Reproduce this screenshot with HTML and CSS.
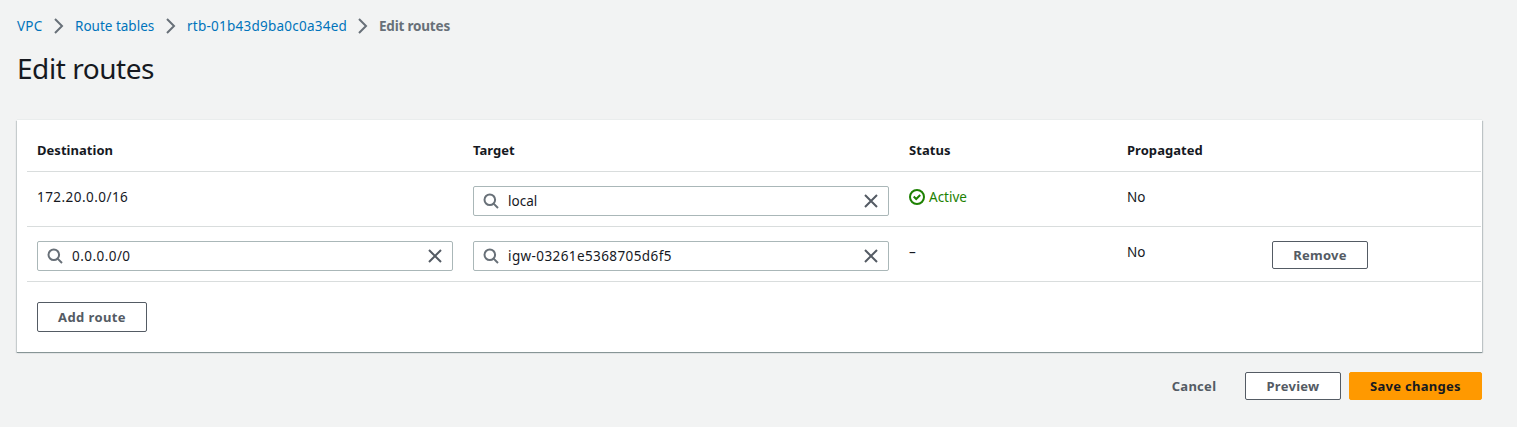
FILE: index.html
```html
<!DOCTYPE html>
<html lang="en">
<head>
<meta charset="utf-8">
<title>Edit routes</title>
<link rel="stylesheet" href="styles.css">
</head>
<body>
<svg width="0" height="0" class="defs">
  <symbol id="chevron" viewBox="0 0 16 16"><path d="M4 1l7 7-7 7"/></symbol>
  <symbol id="search" viewBox="0 0 16 16"><circle cx="6.8" cy="6.8" r="5.3"/><path d="M10.6 10.6L15 15"/></symbol>
  <symbol id="close" viewBox="0 0 16 16"><path d="M2 2l12 12M14 2L2 14"/></symbol>
  <symbol id="check" viewBox="0 0 16 16"><circle cx="8" cy="8" r="7"/><path d="M4.7 7.5l2.5 2.5 4-4"/></symbol>
</svg>
<main class="page">
  <nav class="crumbs">
    <a class="crumb vpc">VPC</a><svg class="icon chev"><use href="#chevron"/></svg>
    <a class="crumb tables">Route tables</a><svg class="icon chev"><use href="#chevron"/></svg>
    <a class="crumb rtb">rtb-01b43d9ba0c0a34ed</a><svg class="icon chev"><use href="#chevron"/></svg>
    <span class="crumb current">Edit routes</span>
  </nav>
  <h1 class="title">Edit routes</h1>
  <section class="card">
    <div class="row head">
      <div>Destination</div><div>Target</div><div>Status</div><div>Propagated</div><div></div>
    </div>
    <div class="row">
      <div class="text"><span class="cidr">172.20.0.0/16</span></div>
      <div class="field"><svg class="icon"><use href="#search"/></svg><span class="value">local</span><svg class="icon x"><use href="#close"/></svg></div>
      <div class="text active"><svg class="icon ok"><use href="#check"/></svg><span>Active</span></div>
      <div class="text">No</div><div></div>
    </div>
    <div class="row">
      <div class="field"><svg class="icon"><use href="#search"/></svg><span class="value zero">0.0.0.0/0</span><svg class="icon x"><use href="#close"/></svg></div>
      <div class="field"><svg class="icon"><use href="#search"/></svg><span class="value igw">igw-03261e5368705d6f5</span><svg class="icon x"><use href="#close"/></svg></div>
      <div class="text dash">–</div>
      <div class="text">No</div>
      <div><button class="btn remove">Remove</button></div>
    </div>
    <button class="btn add">Add route</button>
  </section>
  <footer class="actions">
    <button class="btn link">Cancel</button>
    <button class="btn preview">Preview</button>
    <button class="btn primary">Save changes</button>
  </footer>
</main>
</body>
</html>
```
FILE: styles.css
```css
* { box-sizing: border-box; }
body {
  margin: 0;
  background: #f2f3f3;
  color: #16191f;
  font: 14px/22px "Noto Sans", "Open Sans", sans-serif;
}
.defs { display: block; height: 0; }
.page { width: 1482px; padding: 15px 0 0 17px; }
.icon {
  flex: none;
  width: 16px;
  height: 16px;
  fill: none;
  stroke: #687078;
  stroke-width: 2;
}
.crumbs { display: flex; align-items: center; height: 22px; font-size: 13.5px; white-space: nowrap; }
.crumb { color: #0073bb; }
.chev { margin: 0 8px; }
.vpc { width: 26px; letter-spacing: .2px; }
.tables { width: 80px; }
.rtb { width: 160px; letter-spacing: .24px; }
.current { color: #687078; font-weight: 700; letter-spacing: -.2px; }
.title { margin: 13px 0 0; font-size: 28px; line-height: 36px; font-weight: 400; letter-spacing: -.45px; }
.card {
  height: 232px;
  margin-top: 34px;
  padding-left: 10px;
  background: #fff;
  box-shadow: 0 -1px 0 #eaeded, 0 1px 0 #879596, 1px 1px 1px rgba(0, 28, 36, .22), -1px 1px 1px rgba(0, 28, 36, .18);
}
.row {
  display: grid;
  grid-template-columns: 416px 416px 198px 125px 1fr;
  column-gap: 20px;
  height: 55px;
  padding: 14px 0 0 10px;
  margin-right: 1px;
  border-bottom: 1px solid #d9dddd;
}
.head { height: 52px; padding-top: 19px; font-size: 13px; font-weight: 700; letter-spacing: .04px; }
.text { font-size: 13.5px; }
.cidr { letter-spacing: .45px; }
.field {
  display: flex;
  align-items: center;
  gap: 9px;
  height: 30px;
  padding: 0 9px;
  border: 1px solid #aab7b8;
  border-radius: 2px;
}
.value { flex: 1; font-size: 13.5px; }
.zero { letter-spacing: .45px; }
.igw { letter-spacing: .4px; }
.x { stroke: #545b64; }
.active { display: flex; align-items: center; gap: 4px; height: 22px; color: #1d8102; }
.ok { stroke: #1d8102; }
.btn {
  display: block;
  height: 28px;
  padding: 0;
  background: #fff;
  border: 1px solid #545b64;
  border-radius: 2px;
  color: #545b64;
  font: 700 13px/20px "Noto Sans", "Open Sans", sans-serif;
  letter-spacing: .28px;
  text-align: center;
}
.remove { width: 96px; }
.add { width: 110px; height: 30px; margin: 20px 0 0 10px; letter-spacing: .4px; }
.actions { display: flex; justify-content: flex-end; margin-top: 20px; }
.link { width: 86px; margin-right: 8px; border-color: transparent; background: transparent; }
.preview { width: 96px; margin-right: 8px; }
.primary { width: 133px; background: #f90; border-color: #f90; color: #16191f; }
```
